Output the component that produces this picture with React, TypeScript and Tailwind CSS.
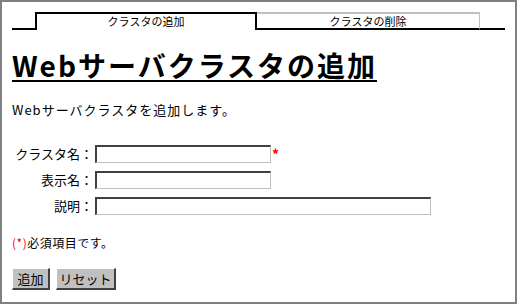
const jp = "font-['Noto_Sans_CJK_JP','Noto_Sans',sans-serif]";

const fields = [
  { label: "クラスタ名：", width: "w-[176px]", required: true },
  { label: "表示名：", width: "w-[176px]", required: false },
  { label: "説明：", width: "w-[336px]", required: false },
];

function Field({ label, width, required }: { label: string; width: string; required: boolean }) {
  return (
    <div className="flex h-[26px] items-start">
      <label className="w-[83px] pr-[2px] text-right text-[13px] leading-[18px] text-black">{label}</label>
      <input
        type="text"
        className={`${width} h-[18px] border-t-2 border-l-2 border-r border-b border-t-[#404040] border-l-[#404040] border-r-[#c0c0c0] border-b-[#c0c0c0] bg-white outline-none`}
      />
      {required && <span className="ml-[1px] text-[14px] leading-[18px] font-bold text-[#ff0000]">*</span>}
    </div>
  );
}

export default function App() {
  return (
    <div className={`${jp} h-[304px] w-[517px] overflow-hidden border-2 border-[#808080] bg-white px-[10px] pt-[10px] text-black`}>
      {/* tabs */}
      <div className="flex h-[18px] items-stretch text-[11px] leading-[14px]">
        <div className="w-[23px] border-b-2 border-black" />
        <div className="w-[222px] border-t-2 border-l-2 border-r-2 border-black text-center">クラスタの追加</div>
        <div className="w-[223px] border-t-2 border-r border-b-2 border-t-[#c0c0c0] border-r-[#c0c0c0] border-b-black text-center">
          クラスタの削除
        </div>
        <div className="flex-1 border-b-2 border-black" />
      </div>

      <h1 className="mt-[20px] inline-block border-b-2 border-black text-[28px] leading-[30px] font-bold tracking-[2px]">
        Webサーバクラスタの追加
      </h1>

      <p className="mt-[18px] text-[13px] leading-[20px] tracking-[1px]">Webサーバクラスタを追加します。</p>

      <div className="mt-[25px] flex flex-col">
        {fields.map((f) => (
          <Field key={f.label} {...f} />
        ))}
      </div>

      <p className="mt-[12px] text-[12px] leading-[16px] tracking-[0.5px]">
        <span className="text-[#ff0000]">(*)</span>必須項目です。
      </p>

      <div className="mt-[17px] flex gap-[6px]">
        <button className="h-[22px] w-[38px] border-t border-l border-r-2 border-b-2 border-t-white border-l-white border-r-[#404040] border-b-[#404040] bg-[#c0c0c0] px-0 text-[13px] leading-[18px]">
          追加
        </button>
        <button className="h-[22px] w-[60px] border-t border-l border-r-2 border-b-2 border-t-white border-l-white border-r-[#404040] border-b-[#404040] bg-[#c0c0c0] px-0 text-[13px] leading-[18px]">
          リセット
        </button>
      </div>
    </div>
  );
}
